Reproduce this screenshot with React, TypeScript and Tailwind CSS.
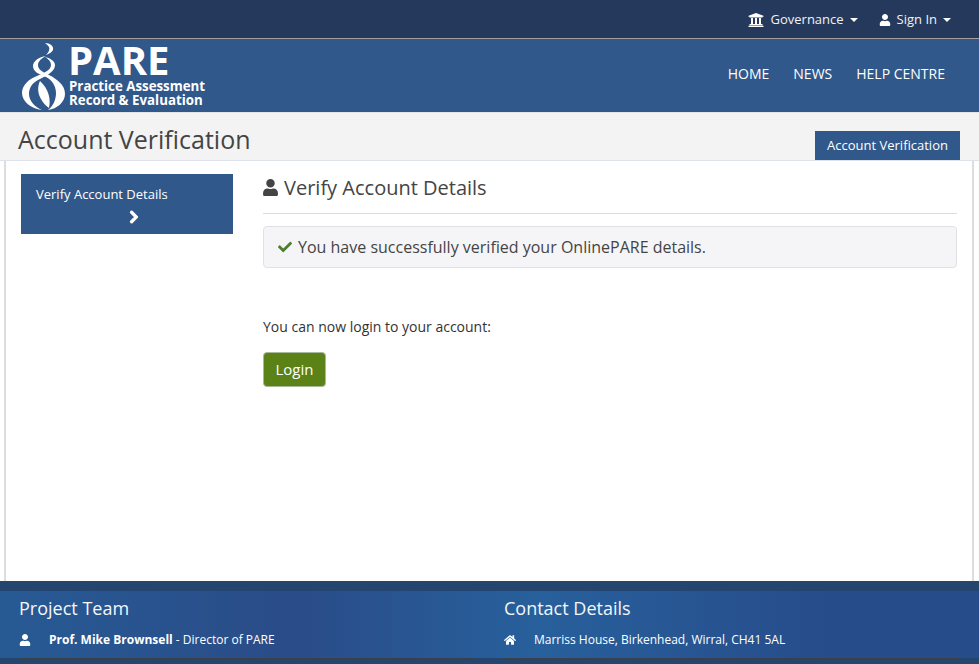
import { FaUniversity, FaUser, FaCheck, FaChevronRight, FaHome } from "react-icons/fa";

function Caret() {
  return <span className="ml-[6px] inline-block h-0 w-0 border-x-[4px] border-t-[4px] border-x-transparent border-t-white align-middle" />;
}

function Logo() {
  return (
    <svg width="50" height="72" viewBox="0 0 50 72" className="mt-[1px] shrink-0" fill="#fff">
      <path d="M27 3C32 3 36 6 35 10C34 12 31 14 28 15C31 12 32 9 31 7C30 5 28 4 27 3Z" />
      <path d="M28 16C21 17 15 21 15 26C15 32 21 34 28 37C34 40 38 46 38 53C38 60 35 66 30 70C39 69 47 62 47 54C47 45 39 39 31 35C25 32 20 30 20 25C20 21 24 18 28 16Z" />
      <path d="M27 17C31 19 33 22 33 25C33 30 26 33 19 36C11 39 4 45 4 53C4 61 13 69 24 70C17 67 11 61 11 54C11 47 15 42 22 39C30 35 37 31 37 25C37 21 32 18 27 17Z" />
      <path d="M22 41C19 47 20 54 23 59C25 63 28 66 31 68C33 60 31 49 22 41Z" />
    </svg>
  );
}

export default function App() {
  return (
    <div className="flex h-[664px] w-[979px] flex-col overflow-hidden bg-white font-['Open_Sans',sans-serif] text-[14px] text-[#333]">
      <div className="flex h-[39px] items-center justify-end gap-[21px] border-b border-[#a39e96] bg-[#25395d] pr-[28px] pt-[1px] text-[13px] text-[#f0f2f5]">
        <div className="flex items-center">
          <FaUniversity className="mr-[7px] text-[16px] text-white" />
          Governance
          <Caret />
        </div>
        <div className="flex items-center">
          <FaUser className="mr-[6px] text-[12px] text-white" />
          Sign In
          <Caret />
        </div>
      </div>

      <div className="flex h-[73px] items-center justify-between bg-[#30588a] pl-[18px] pr-[34px]">
        <div className="flex items-start self-start">
          <Logo />
          <div className="flex flex-col font-bold text-white">
            <span className="mt-[1px] h-[39px] text-[40px] leading-[39px]">PARE</span>
            <span className="ml-[1px] text-[13.3px] leading-[14px] whitespace-nowrap">Practice Assessment</span>
            <span className="ml-[1px] text-[13.3px] leading-[14px] whitespace-nowrap">Record &amp; Evaluation</span>
          </div>
        </div>
        <nav className="mb-[4px] flex gap-[24px] text-[14px] font-medium text-white">
          <span>HOME</span>
          <span>NEWS</span>
          <span>HELP CENTRE</span>
        </nav>
      </div>

      <div className="flex h-[49px] items-end justify-between border-y border-y-[#dde2ec] border-t-[#e4e4e4] bg-[#f3f3f3] pl-[18px] pr-[19px]">
        <h1 className="mb-[4px] text-[25px] leading-[33px] text-[#444]">Account Verification</h1>
        <div className="flex h-[29px] w-[145px] items-center justify-center bg-[#30588a] text-[13px] text-white">Account Verification</div>
      </div>

      <div className="ml-[4px] mr-[5px] flex flex-1 border-x-2 border-x-[#dddddd] pl-[15px] pr-[15px]">
        <aside className="mt-[13px] h-[60px] w-[212px] bg-[#30588a] pl-[15px] pt-[11px] text-[13px] text-white">
          <div className="leading-[18px]">Verify Account Details</div>
          <div className="mt-[7px] flex justify-center pr-[1px]">
            <FaChevronRight className="stroke-white stroke-[40] text-[14px]" />
          </div>
        </aside>
        <main className="ml-[30px] flex-1 pt-[13px]">
          <div className="flex h-[40px] items-center border-b border-[#dddddd] pb-[12px] text-[20px] text-[#444]">
            <FaUser className="-ml-[1px] mr-[5px] text-[17px]" />
            Verify Account Details
          </div>
          <div className="mt-[12px] flex h-[42px] items-center rounded-[4px] border border-[#dfe1e7] bg-[#f5f5f8] pl-[14px] text-[16px] text-[#444]">
            <FaCheck className="mr-[6px] text-[14px] text-[#4e7d2e]" />
            You have successfully verified your OnlinePARE details.
          </div>
          <p className="mt-[49px] text-[14px] leading-[20px] text-[#333]">You can now login to your account:</p>
          <button className="mt-[15px] flex h-[35px] w-[63px] items-center justify-center rounded-[4px] border border-[#a9b99a] bg-[#5a8216] text-[15px] text-white">Login</button>
        </main>
      </div>

      <footer className="flex h-[83px] flex-col bg-[#24466e]">
        <div className="mt-[10px] flex h-[67px] bg-[linear-gradient(90deg,#275a94_0%,#2a4c88_30%,#27609c_55%,#274c8a_85%)] pl-[19px] text-white">
          <div className="w-[485px]">
            <div className="mt-[5px] text-[18px] leading-[24px] text-[#f4f6fa]">Project Team</div>
            <div className="mt-[12px] flex items-center text-[12px] leading-[16px]">
              <FaUser className="w-[30px] pr-[18px] text-[12px]" />
              <span><b>Prof. Mike Brownsell</b> - Director of PARE</span>
            </div>
          </div>
          <div className="flex-1">
            <div className="mt-[5px] text-[18px] leading-[24px] text-[#f4f6fa]">Contact Details</div>
            <div className="mt-[12px] flex items-center text-[12px] leading-[16px]">
              <FaHome className="w-[30px] pr-[18px] text-[12px]" />
              <span>Marriss House, Birkenhead, Wirral, CH41 5AL</span>
            </div>
          </div>
        </div>
        <div className="flex h-[1px] pl-[19px] pr-[20px]">
          <div className="h-[1px] w-[454px] bg-[#3a3f4a]" />
          <div className="ml-[31px] h-[1px] flex-1 bg-[#3a3f4a]" />
        </div>
      </footer>
    </div>
  );
}
